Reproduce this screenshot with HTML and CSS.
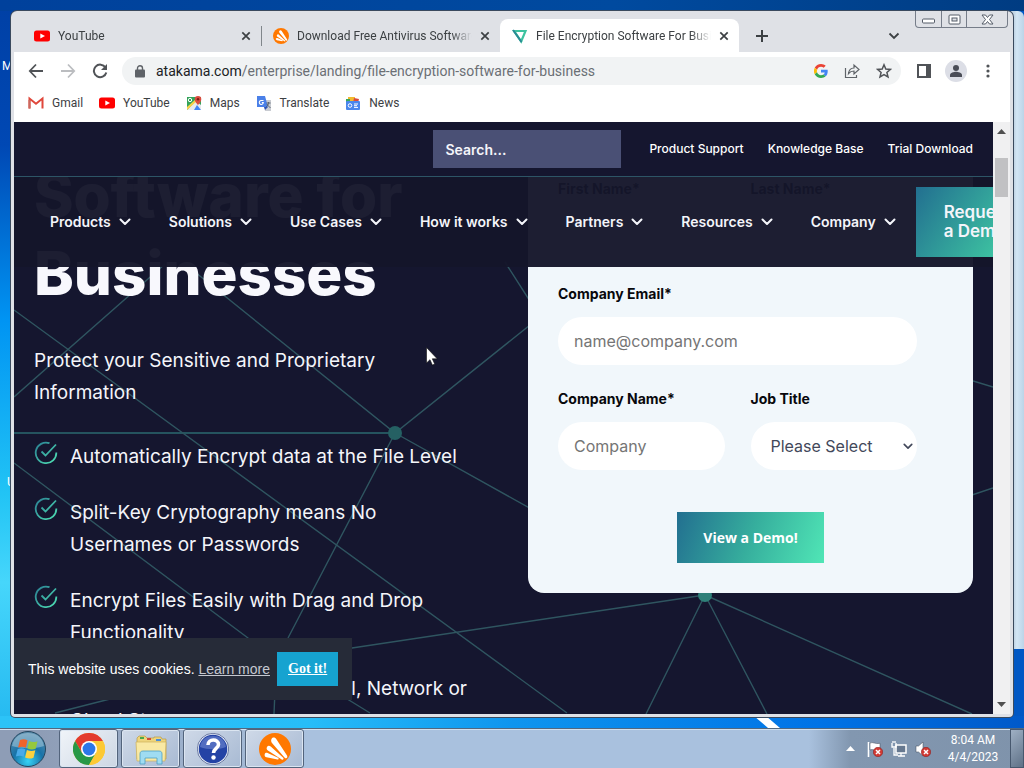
FILE: index.html
```html
<!DOCTYPE html>
<html lang="en">
<head>
<meta charset="utf-8">
<title>File Encryption Software For Business</title>
<link rel="stylesheet" href="styles.css">
</head>
<body>
<svg class="defs" width="0" height="0" aria-hidden="true">
  <defs>
    <linearGradient id="teal" x1="0" y1="0" x2="1" y2="1"><stop offset="0" stop-color="#2a7f93"/><stop offset="1" stop-color="#4fe3b5"/></linearGradient>
    <symbol id="yt" viewBox="0 0 16 12"><rect width="16" height="11" y="0.5" rx="2.5" fill="#f00"/><path d="M6.3 3.4v5.2L11 6z" fill="#fff"/></symbol>
    <symbol id="avast" viewBox="0 0 32 32"><circle cx="16" cy="16" r="16" fill="#ff7800"/><path d="M12.500 6c1.200-2.200 3.800-1.700 4.900.2L28 22.500c1 2-.5 3.800-2.300 2.300L13.200 10.200C12 8.800 11.900 7.300 12.500 6zM8 14c.8-1.500 2.300-1.600 3.700-.6l12.500 11.400c1 1-.1 2.500-1.500 1.800L8.900 17.500C7.600 16.600 7.300 15.300 8 14zM5.700 21.200c.4-1.300 1.600-1.700 2.900-1.200l10.500 4.700c1 .6.500 2-.6 1.900L7.600 24.300c-1.600-.4-2.300-1.700-1.900-3.100z" fill="#fff"/></symbol>
    <symbol id="x" viewBox="0 0 10 10"><path d="M1.300 1.300l7.400 7.400M8.700 1.300L1.300 8.700" stroke="#3c4043" stroke-width="1.700"/></symbol>
    <symbol id="chev" viewBox="0 0 12 8"><path d="M1.500 1.500L6 6l4.500-4.500" fill="none" stroke="currentColor" stroke-width="2" stroke-linecap="round" stroke-linejoin="round"/></symbol>
    <symbol id="check" viewBox="0 0 24 24"><path d="M15.500 2.200A10.300 10.300 0 1 0 22.300 11.500M7.500 10.500l4 4L22 3.500" fill="none" stroke="url(#teal)" stroke-width="1.800"/></symbol>
    <symbol id="bad" viewBox="0 0 10 10"><circle cx="5" cy="5" r="4.700" fill="#d23a34" stroke="#8d2020" stroke-width=".6"/><path d="M3 3l4 4M7 3L3 7" stroke="#fff" stroke-width="1.500"/></symbol>
  </defs>
</svg>

<main class="desktop">
  <div class="back-window" aria-hidden="true"></div>
  <span class="desk-label desk-label-top" aria-hidden="true">M</span>
  <span class="desk-label desk-label-low" aria-hidden="true">U</span>
  <svg class="streak" viewBox="0 0 30 12" aria-hidden="true"><path d="M0 0h12l14 12H14z" fill="#fff"/></svg>

  <section class="window">
    <header class="tabstrip">
      <div class="tab">
        <svg class="fav" aria-hidden="true"><use href="#yt"/></svg><span class="tab-title">YouTube</span>
        <button class="icon-btn" aria-label="Close YouTube"><svg class="i10"><use href="#x"/></svg></button>
      </div>
      <div class="tab tab-sep">
        <svg class="fav" aria-hidden="true"><use href="#avast"/></svg><span class="tab-title">Download Free Antivirus Software</span>
        <button class="icon-btn" aria-label="Close Download"><svg class="i10"><use href="#x"/></svg></button>
      </div>
      <div class="tab tab-active">
        <svg class="fav" viewBox="0 0 16 16" aria-hidden="true"><path d="M2.200 3h11.300L9.200 13.500z" fill="none" stroke="#3dc3a0" stroke-width="2.200"/><path d="M1 2l8.500 12" stroke="#2a8a94" stroke-width="2"/></svg><span class="tab-title">File Encryption Software For Business</span>
        <button class="icon-btn" aria-label="Close File Encryption"><svg class="i10"><use href="#x"/></svg></button>
      </div>
      <button class="icon-btn new-tab" aria-label="New tab"><svg class="i12" viewBox="0 0 12 12"><path d="M6 0v12M0 6h12" stroke="#3c4043" stroke-width="2"/></svg></button>
      <button class="icon-btn tab-search" aria-label="Search tabs"><svg class="i12" viewBox="0 0 12 12"><path d="M1.500 3.500L6 8l4.500-4.500" fill="none" stroke="#3c4043" stroke-width="1.800"/></svg></button>
      <div class="controls">
        <button aria-label="Minimize"><svg width="13" height="10" viewBox="0 0 13 10"><rect x=".5" y="5" width="12" height="4" rx="1" fill="#fff" stroke="#555c68"/></svg></button>
        <button aria-label="Maximize"><svg width="13" height="11" viewBox="0 0 13 11"><rect x="1" y="1" width="11" height="9" rx="1" fill="#fff" stroke="#555c68"/><rect x="4" y="4" width="5" height="3" fill="#dfe1e6" stroke="#555c68"/></svg></button>
        <button aria-label="Close"><svg width="13" height="11" viewBox="0 0 13 11"><path d="M1 1h3.500l2 2.500L8.500 1H12L8.500 5.500 12 10H8.500l-2-2.500-2 2.500H1l3.500-4.500z" fill="#fff" stroke="#555c68"/></svg></button>
      </div>
    </header>

    <div class="toolbar">
      <button class="icon-btn nav-btn" aria-label="Back"><svg class="i16" viewBox="0 0 16 16"><path d="M15 8H2M8 1.500L1.800 8 8 14.500" fill="none" stroke="#505357" stroke-width="1.800"/></svg></button>
      <button class="icon-btn nav-btn" aria-label="Forward"><svg class="i16" viewBox="0 0 16 16"><path d="M1 8h13M8 1.500L14.200 8 8 14.500" fill="none" stroke="#bbbdc0" stroke-width="1.800"/></svg></button>
      <button class="icon-btn nav-btn" aria-label="Reload"><svg class="i16" viewBox="0 0 16 16"><path d="M13.500 4.500A6.300 6.300 0 1 0 14.300 9.500" fill="none" stroke="#505357" stroke-width="2"/><path d="M15 1v6H9z" fill="#505357"/></svg></button>
      <div class="omnibox">
        <svg width="10" height="13" viewBox="0 0 10 13" aria-hidden="true"><rect y="4.500" width="10" height="8" rx="1" fill="#5f6368"/><path d="M2.500 5V3.200a2.500 2.500 0 0 1 5 0V5" fill="none" stroke="#5f6368" stroke-width="1.400"/></svg>
        <span class="url"><b>atakama.com</b>/enterprise/landing/file-encryption-software-for-business</span>
        <button class="icon-btn" aria-label="Google"><svg class="i14" viewBox="0 0 48 48"><path fill="#ea4335" d="M24 9.500c3.500 0 6.700 1.200 9.200 3.600l6.900-6.900C35.900 2.400 30.500 0 24 0 14.600 0 6.500 5.400 2.600 13.200l8 6.200C12.400 13.700 17.700 9.500 24 9.500z"/><path fill="#4285f4" d="M47 24.500c0-1.600-.2-3.100-.4-4.500H24v9h12.900c-.6 3-2.200 5.500-4.700 7.200l7.700 6C44.400 38 47 31.800 47 24.500z"/><path fill="#fbbc05" d="M10.500 28.600a14.500 14.500 0 0 1 0-9.200l-8-6.200a24 24 0 0 0 0 21.600z"/><path fill="#34a853" d="M24 48c6.500 0 11.900-2.100 15.900-5.800l-7.700-6c-2.200 1.400-4.900 2.300-8.200 2.300-6.300 0-11.600-4.200-13.500-9.900l-8 6.200C6.500 42.600 14.600 48 24 48z"/></svg></button>
        <button class="icon-btn" aria-label="Share"><svg class="i16" viewBox="0 0 16 16"><path d="M1.500 5v9.500h11V12M4.500 10.500C5 6.500 7 5 10 5V2l5 4.500-5 4.500V8C7.500 8 6 8.700 4.500 10.500z" fill="none" stroke="#5f6368" stroke-width="1.200"/></svg></button>
        <button class="icon-btn" aria-label="Bookmark"><svg class="i16" viewBox="0 0 16 16"><path d="M8 1.800l1.800 4.200 4.600.4-3.500 3 1.100 4.500L8 11.500l-4 2.400 1.100-4.500-3.500-3L6.200 6z" fill="none" stroke="#505357" stroke-width="1.500"/></svg></button>
      </div>
      <button class="icon-btn" aria-label="Side panel"><svg class="i14" viewBox="0 0 14 14"><path d="M0 0h14v14H0zM2 2v10h7V2z" fill="#505357" fill-rule="evenodd"/></svg></button>
      <button class="icon-btn avatar" aria-label="Profile"><svg class="i14" viewBox="0 0 14 14"><circle cx="7" cy="4" r="3" fill="#4a4d57"/><path d="M1 13v-2c0-2.500 4-3.300 6-3.300s6 .8 6 3.300v2z" fill="#4a4d57"/></svg></button>
      <button class="icon-btn" aria-label="Menu"><svg class="i14" viewBox="0 0 14 14"><g fill="#505357"><circle cx="7" cy="2" r="1.600"/><circle cx="7" cy="7" r="1.600"/><circle cx="7" cy="12" r="1.600"/></g></svg></button>
    </div>

    <nav class="bookmarks" aria-label="Bookmarks">
      <a href="#"><svg class="fav" viewBox="0 0 16 16" aria-hidden="true"><path d="M1.500 13.500V3.500L8 8.800l6.500-5.300v10" fill="none" stroke="#e0473b" stroke-width="2"/><path d="M1.500 5v8.500" stroke="#c9695f" stroke-width="2"/></svg>Gmail</a>
      <a href="#"><svg class="fav" aria-hidden="true"><use href="#yt"/></svg>YouTube</a>
      <a href="#"><svg class="fav" viewBox="0 0 16 16" aria-hidden="true"><path d="M1 2h14v13H1z" fill="#34a35a"/><path d="M1 15l9-9 5 4v5z" fill="#e8eaed"/><path d="M8 15l3-5 4 5z" fill="#4285f4"/><path d="M1 12l9-8 1 2-10 9z" fill="#fbd24a"/><circle cx="4" cy="5" r="1.700" fill="none" stroke="#fff"/><path d="M12 1a3.300 3.300 0 0 0-3.300 3.300C8.700 7 12 10 12 10s3.300-3 3.300-5.700A3.300 3.300 0 0 0 12 1z" fill="#dd4b3e"/><circle cx="12" cy="4.300" r="1.200" fill="#7c1d14"/></svg>Maps</a>
      <a href="#"><svg class="fav" viewBox="0 0 16 16" aria-hidden="true"><path d="M7 5h8v11H9z" fill="#c9ccd2"/><path d="M1 1h8l3 11H1z" fill="#4a80e8"/><path d="M7.500 5.500H5.800a2 2 0 1 0 1.500 2H5.800" fill="none" stroke="#fff" stroke-width="1.100"/><path d="M10.500 8h4M12.500 7c0 3-1 4-2.500 5M11 9c1 2 2 3 3.500 3.500" fill="none" stroke="#59636f"/><path d="M8 12h4l-3 3z" fill="#2c53b8"/></svg>Translate</a>
      <a href="#"><svg class="fav" viewBox="0 0 16 16" aria-hidden="true"><path d="M3 2h7v4H3z" fill="#f2b92e"/><path d="M9 3l5 1-1 4H8z" fill="#d94a3d"/><path d="M1 4h4v4H1z" fill="#39a65a"/><rect x="1" y="6" width="14" height="9" rx="1" fill="#4a86ec"/><circle cx="5" cy="10.500" r="1.800" fill="none" stroke="#fff"/><path d="M9 9h4M9 10.700h3M9 12.400h4" stroke="#fff"/></svg>News</a>
    </nav>

    <div class="viewport">
      <div class="page">
        <svg class="network" viewBox="14 122 979 592" preserveAspectRatio="xMinYMin slice" aria-hidden="true">
          <g fill="none" stroke="#2f5560" stroke-width="1.400">
            <path d="M14 433H395" stroke="#2b6a70"/>
            <path d="M185 264L395 433L540 317M395 433L560 525M395 433L288 638"/>
            <path d="M14 310L567 713M14 397L165 264M14 463L248 638L370 713"/>
            <path d="M505 262L535 309M55 713L110 699L352 648L705 595M275 690L274 714"/>
            <path d="M705 595L646 714M705 595L767 714M705 595L972 714M960 377L993 387M960 499L993 488"/>
          </g>
          <circle cx="395" cy="433" r="7" fill="#256063"/><circle cx="705" cy="595" r="7" fill="#2f8079"/>
        </svg>

        <div class="hero">
          <div class="pitch">
            <h1>Software for Businesses</h1>
            <p>Protect your Sensitive and Proprietary Information</p>
            <ul>
              <li><svg><use href="#check"/></svg><span>Automatically Encrypt data at the File Level</span></li>
              <li><svg><use href="#check"/></svg><span>Split-Key Cryptography means No Usernames or Passwords</span></li>
              <li><svg><use href="#check"/></svg><span>Encrypt Files Easily with Drag and Drop Functionality</span></li>
              <li><svg><use href="#check"/></svg><span>Protect Files across every Local, Network or Cloud Storage</span></li>
            </ul>
          </div>
          <form class="card">
            <div class="field"><label for="first">First Name*</label><input id="first" type="text"></div>
            <div class="field"><label for="last">Last Name*</label><input id="last" type="text"></div>
            <div class="field wide"><label for="email">Company Email*</label><input id="email" type="email" placeholder="name@company.com"></div>
            <div class="field"><label for="company">Company Name*</label><input id="company" type="text" placeholder="Company"></div>
            <div class="field"><label for="job">Job Title</label>
              <div class="select"><select id="job"><option>Please Select</option></select><svg aria-hidden="true"><use href="#chev"/></svg></div></div>
            <button class="demo wide" type="button">View a Demo!</button>
          </form>
        </div>

        <header class="site-header">
          <div class="utility">
            <input class="search" type="search" placeholder="Search..." aria-label="Search">
            <a href="#">Product Support</a><a href="#">Knowledge Base</a><a href="#">Trial Download</a>
          </div>
          <nav class="menu" aria-label="Main">
            <a href="#">Products<svg><use href="#chev"/></svg></a>
            <a href="#">Solutions<svg><use href="#chev"/></svg></a>
            <a href="#">Use Cases<svg><use href="#chev"/></svg></a>
            <a href="#">How it works<svg><use href="#chev"/></svg></a>
            <a href="#">Partners<svg><use href="#chev"/></svg></a>
            <a href="#">Resources<svg><use href="#chev"/></svg></a>
            <a href="#">Company<svg><use href="#chev"/></svg></a>
            <a class="request" href="#">Request<br>a Demo</a>
          </nav>
        </header>

        <div class="cookies">
          <span>This website uses cookies. <a href="#">Learn more</a></span>
          <button type="button">Got it!</button>
        </div>
      </div>
      <div class="scrollbar" aria-hidden="true">
        <svg width="9" height="5" viewBox="0 0 9 5"><path d="M0 5l4.500-5L9 5z" fill="#505050"/></svg>
        <span class="thumb"></span>
        <svg width="9" height="5" viewBox="0 0 9 5"><path d="M0 0l4.500 5L9 0z" fill="#505050"/></svg>
      </div>
    </div>
  </section>

  <svg class="cursor" width="12" height="19" viewBox="0 0 12 19" aria-hidden="true"><path d="M.5.5v15.500l3.500-3.300 2.400 5.400 2.300-1-2.400-5.300h4.900z" fill="#fff" stroke="#111" stroke-width=".6"/></svg>
</main>

<footer class="taskbar">
  <button class="start" aria-label="Start"><svg width="38" height="38" viewBox="0 0 38 38">
    <defs><radialGradient id="orb" cx=".5" cy=".85" r=".85"><stop offset="0" stop-color="#35d3f5"/><stop offset=".5" stop-color="#1873a8"/><stop offset="1" stop-color="#5d8fae"/></radialGradient></defs>
    <circle cx="19" cy="19" r="17.500" fill="url(#orb)" stroke="#24465f"/><path d="M3 16C5 6 12 3 19 3s14 3 16 13c-9 3-22 3-32 0z" fill="#cfe3ee" opacity=".4"/>
    <path d="M11 10c3-1.300 5-1 7.500.3l-1.700 7.400c-2.600-1.400-4.600-1.300-7.700-.3z" fill="#f0642a"/><path d="M20 11c3 1.400 5.300 1.500 8.500.2L26.700 18.700c-3 1.200-5.400 1-8.400-.4z" fill="#95c83d"/><path d="M8.700 19c3-1.200 5-1 7.700.2l-1.800 7.500c-2.600-1.300-4.600-1.300-7.700-.2z" fill="#49aae8"/><path d="M17.900 20c3 1.300 5.300 1.500 8.400.3l-1.800 7.400c-3 1.300-5.400 1.100-8.400-.3z" fill="#fbd13e"/></svg></button>
  <button class="task task-on" aria-label="Chrome"><svg class="i32" viewBox="0 0 32 32"><circle cx="16" cy="16" r="16" fill="#fcc934"/><path d="M16 8h13.860A16 16 0 0 0 2.140 8l6.930 12z" fill="#e33b2e"/><path d="M2.140 8A16 16 0 0 0 16 32l6.930-12-13.860 0z" fill="#279847"/><path d="M29.860 8A16 16 0 0 1 16 32l6.930-12A8 8 0 0 0 16 8z" fill="#fcc934"/><circle cx="16" cy="16" r="8" fill="#fff"/><circle cx="16" cy="16" r="6.400" fill="#2c77e8"/></svg></button>
  <button class="task" aria-label="Explorer"><svg class="i32" viewBox="0 0 32 32"><path d="M2 5l2-2h6l2 2h7V4h7l1 2h4v20H2z" fill="#efd57c" stroke="#b99b48" stroke-width=".7"/><path d="M1 9h30l-1 19H2z" fill="#f9e9a4" stroke="#cdb15c" stroke-width=".7"/><path d="M5 4h4v2H5z" fill="#49a84a"/><path d="M12 5h4v2h-4z" fill="#d44b34"/><path d="M21 6h5v2h-5z" fill="#4b8ed8"/><path d="M5 31V21c0-2 1-3 3-3h16c2 0 3 1 3 3v10h-5v-6H10v6z" fill="#9fdcf2" stroke="#4d9fc4" stroke-width=".8"/></svg></button>
  <button class="task" aria-label="Help"><svg class="i32" viewBox="0 0 32 32"><circle cx="16" cy="16" r="15" fill="#2443a5" stroke="#e7edf7" stroke-width="1.500"/><circle cx="16" cy="16" r="15.700" fill="none" stroke="#23366e" stroke-width=".6"/><path d="M3 14C4 6 10 3 16 3s12 3 13 11c-8 3-18 3-26 0z" fill="#7f98dc" opacity=".5"/><path d="M11 12c0-6.500 10.500-6.500 10.500-.5 0 4-5 4-5 8.500" fill="none" stroke="#fff" stroke-width="3.600"/><circle cx="16.500" cy="24.500" r="2.200" fill="#fff"/></svg></button>
  <button class="task" aria-label="Avast"><svg class="i32"><use href="#avast"/></svg></button>
  <div class="tray">
    <svg width="9" height="5" viewBox="0 0 9 5" aria-hidden="true"><path d="M0 5l4.500-5L9 5z" fill="#fff"/></svg>
    <svg class="i16" viewBox="0 0 16 16" aria-hidden="true"><path d="M1.500 1v15" stroke="#fff" stroke-width="1.600"/><path d="M3 2c3-1.500 5 1.500 10 .3v7C8 10.500 6 7.500 3 9z" fill="#fff" stroke="#3b4656" stroke-width=".5"/><use href="#bad" x="6" y="6" width="10" height="10"/></svg>
    <svg class="i16" viewBox="0 0 16 16" aria-hidden="true"><rect x="5" y="4" width="10" height="8" fill="#66788f" stroke="#fff" stroke-width="1.500"/><path d="M7 15h7M10 12v3M3 7v7h4M1 2v4h4V2M2 0v2M4 0v2" fill="none" stroke="#fff" stroke-width="1.300"/></svg>
    <svg class="i16" viewBox="0 0 16 16" aria-hidden="true"><path d="M1 5h2.500L8 1v14l-4.500-4H1z" fill="#fff" stroke="#3b4656" stroke-width=".5"/><use href="#bad" x="6" y="6" width="10" height="10"/></svg>
    <time class="clock">8:04 AM<br>4/4/2023</time>
  </div>
  <button class="show-desktop" aria-label="Show desktop"></button>
</footer>
</body>
</html>
```
FILE: styles.css
```css
* { box-sizing: border-box; }
body {
  margin: 0;
  height: 100vh;
  display: flex;
  flex-direction: column;
  overflow: hidden;
  font: 12px/16px Roboto, "Noto Sans", sans-serif;
  color: #3c4043;
}
button { font: inherit; border: 0; padding: 0; background: none; }
a { color: inherit; text-decoration: none; }
svg { flex: none; display: block; }
.defs { position: absolute; }
.i10 { width: 10px; height: 10px; }
.i12 { width: 12px; height: 12px; }
.i14 { width: 14px; height: 14px; }
.i16, .fav { width: 16px; height: 16px; }
.i32 { width: 32px; height: 32px; }

.desktop {
  position: relative;
  flex: 1;
  min-height: 0;
  display: flex;
  padding: 11px;
  background:
    linear-gradient(90deg, #00419c, #004a9f 60%, #003c82) top / 100% 11px no-repeat,
    linear-gradient(90deg, #2cc3f7, #27bdf8 30%, #0e95ee 50%, #0073e6 80%, #0059c9) bottom / 100% 12px no-repeat,
    linear-gradient(#0040a5, #0048b4 20%, #0094f3 44%, #22c4f5 68%, #46d6fb 80%, #24b8f0) left / 50% 100% no-repeat,
    #0057c4;
}
.back-window {
  position: absolute;
  top: 11px;
  right: 0;
  width: 24px;
  height: 638px;
  border-radius: 6px 6px 0 0;
  background: linear-gradient(90deg, #c3d6e6 60%, #d3e6f5 70%, #bcd4e8);
}
.desk-label { position: absolute; left: 2px; color: #fff; }
.desk-label-top { top: 58px; }
.desk-label-low { top: 474px; left: 7px; }
.streak { position: absolute; left: 754px; bottom: 0; width: 30px; height: 12px; }
.cursor { position: absolute; left: 426px; top: 347px; }

.window {
  position: relative;
  flex: 1;
  min-width: 0;
  display: flex;
  flex-direction: column;
  padding: 0 3px 3px;
  border-radius: 6px 6px 4px 4px;
  background: #dfe1e6;
  box-shadow: 0 0 0 1px #3a4a5e;
}
.icon-btn { display: flex; align-items: center; justify-content: center; }

.tabstrip { display: flex; height: 41px; padding: 8px 2px 0 8px; }
.tab { flex: 0 1 239px; display: flex; align-items: center; gap: 8px; padding: 0 10px 0 12px; min-width: 0; }
.tab-sep { background: linear-gradient(#80868b, #80868b) 0 50% / 1px 20px no-repeat; }
.tab-active { background: #fff; border-radius: 8px 8px 0 0; }
.tab-title {
  flex: 1;
  overflow: hidden;
  white-space: nowrap;
  -webkit-mask: linear-gradient(90deg, #000 88%, transparent);
  mask: linear-gradient(90deg, #000 88%, transparent);
}
.new-tab { width: 46px; }
.tab-search { width: 30px; margin-left: auto; margin-right: 6px; }
.controls {
  display: flex;
  height: 17px;
  margin-top: -8px;
  border: 1px solid #767d89;
  border-top: 0;
  border-radius: 0 0 4px 4px;
}
.controls button { width: 25px; display: flex; align-items: center; justify-content: center; }
.controls button:last-child { width: 41px; }
.controls button + button { border-left: 1px solid #767d89; }

.toolbar { display: flex; align-items: center; height: 38px; padding: 0 15px 0 6px; gap: 14px; background: #fff; }
.nav-btn { width: 32px; margin-right: -14px; }
.omnibox {
  flex: 1;
  min-width: 0;
  display: flex;
  align-items: center;
  gap: 16px;
  height: 28px;
  margin-left: 6px;
  margin-right: 2px;
  padding: 0 9px 0 13px;
  border-radius: 14px;
  background: #f1f3f4;
}
.url { flex: 1; margin-left: -5px; font-size: 14px; line-height: 18px; color: #6b6f74; white-space: nowrap; }
.url b { font-weight: 400; color: #202124; }
.avatar { width: 22px; height: 22px; border-radius: 50%; background: #dcdee6; }

.bookmarks { display: flex; align-items: center; gap: 16px; height: 32px; padding: 0 14px 6px; background: #fff; }
.bookmarks a { display: flex; align-items: center; gap: 8px; }

.viewport { flex: 1; min-height: 0; display: flex; }
.page {
  position: relative;
  flex: 1;
  min-width: 0;
  overflow: hidden;
  background: #15162f;
  font-family: Inter, "Liberation Sans", sans-serif;
  color: #f4f5fa;
}
.network { position: absolute; inset: 0; width: 100%; height: 100%; }
.hero { position: relative; display: flex; gap: 24px; padding: 34px 20px 0; align-items: flex-start; }
.pitch { flex: 1; min-width: 0; }
.pitch h1 { margin: 0 0 33px; font-size: 60px; line-height: 78px; font-weight: 800; color: #f8f8fd; }
.pitch p { margin: 0 0 32px; padding-right: 80px; font-size: 19px; line-height: 32px; }
.pitch ul { margin: 0; padding: 0; list-style: none; display: grid; gap: 24px; font-size: 19px; line-height: 32px; }
.pitch li { display: flex; gap: 12px; padding-right: 20px; }
.pitch li svg { width: 24px; height: 24px; }

.card {
  flex: none;
  width: 48%;
  max-width: 445px;
  display: grid;
  grid-template-columns: 1fr 1fr;
  gap: 24px 26px;
  padding: 23px 56px 30px 30px;
  border-radius: 16px;
  background: #f1f7fb;
  color: #08080c;
}
.wide { grid-column: 1 / -1; }
.field { min-width: 0; display: grid; gap: 13px; }
.field label { font-size: 14px; line-height: 20px; font-weight: 700; }
.field input, .field select {
  width: 100%;
  height: 48px;
  padding: 0 16px;
  border: 0;
  border-radius: 24px;
  background: #fff;
  font: 16px/24px Inter, sans-serif;
  color: #42485a;
}
.field select { appearance: none; padding: 0 20px; }
.field input::placeholder { color: #757575; opacity: 1; }
.select { position: relative; }
.select svg { position: absolute; right: 4px; top: 21px; width: 10px; height: 7px; color: #42485a; }
.demo {
  justify-self: center;
  margin: 18px 0 0 26px;
  width: 147px;
  height: 51px;
  background: linear-gradient(110deg, #226f90, #36ae9d 50%, #50e6b6);
  color: #fff;
  font: 700 14px/20px "Open Sans", sans-serif;
}

.site-header { position: absolute; inset: 0 0 auto; background: rgba(21, 22, 42, .965); }
.utility {
  display: flex;
  align-items: center;
  justify-content: flex-end;
  gap: 24px;
  height: 55px;
  padding: 0 20px;
  border-bottom: 1px solid #2d5566;
  background: #15162f;
  font-size: 12px;
  line-height: 16px;
  font-weight: 500;
  color: #fff;
}
.search {
  width: 188px;
  height: 38px;
  margin-right: 4px;
  padding: 0 12px;
  border: 0;
  border-radius: 0;
  background: #4a5075;
  font: 600 14px/20px Inter, sans-serif;
}
.search::placeholder { color: #f4f5fa; opacity: 1; }
.menu { display: flex; align-items: center; gap: 38px; height: 90px; padding-left: 36px; font-size: 14px; line-height: 20px; font-weight: 600; white-space: nowrap; }
.menu a { display: flex; align-items: center; gap: 8px; }
.menu svg { width: 12px; height: 8px; }
.menu .request {
  flex: none;
  width: 140px;
  height: 70px;
  margin-left: -18px;
  padding-left: 28px;
  background: linear-gradient(125deg, #226f90, #3ab99f 60%, #50e6b6);
  font-size: 17px;
  line-height: 19px;
}

.cookies {
  position: absolute;
  left: 0;
  bottom: 14px;
  display: flex;
  align-items: center;
  gap: 7px;
  height: 62px;
  padding: 0 14px;
  background: #262b38;
  font: 14px/20px "Liberation Sans", sans-serif;
  color: #fff;
}
.cookies a { color: #c5c8d0; text-decoration: underline; }
.cookies button { height: 34px; padding: 0 11px; background: #16a3d0; color: #fff; font: 700 14px/20px "Liberation Serif", serif; text-decoration: underline; }

.scrollbar { width: 17px; display: flex; flex-direction: column; align-items: center; padding: 7px 0; background: #f0f0f1; }
.thumb { width: 13px; height: 39px; margin: 24px 0 auto; background: #c1c1c3; }

.taskbar {
  flex: none;
  display: flex;
  align-items: center;
  gap: 3px;
  height: 40px;
  border-top: 1px solid #52687f;
  box-shadow: inset 0 1px #d0e0f0;
  background: linear-gradient(90deg, #8e9db6, #8e9db6 4%, #a9c1de 30%, #a9c1de 79%, #8297b0 83%, #7f93ab);
}
.start { width: 56px; display: flex; justify-content: center; }
.task {
  width: 59px;
  height: 39px;
  display: flex;
  align-items: center;
  justify-content: center;
  border: 1px solid #53647c;
  border-radius: 3px;
  box-shadow: inset 0 0 0 1px #dbe5f1;
  background: linear-gradient(135deg, #cfd9e8, #a8bad3);
}
.task-on { background: linear-gradient(135deg, #f0f4f9, #ccd6e3); }
.tray { margin-left: auto; display: flex; align-items: center; gap: 8px; color: #fff; }
.tray > svg:first-child { margin-right: 4px; }
.clock { width: 68px; font-size: 12px; line-height: 17px; text-align: center; }
.show-desktop { width: 14px; height: 39px; border: 1px solid #47586e; background: linear-gradient(135deg, #9fb0c4, #5f7187); }
```
